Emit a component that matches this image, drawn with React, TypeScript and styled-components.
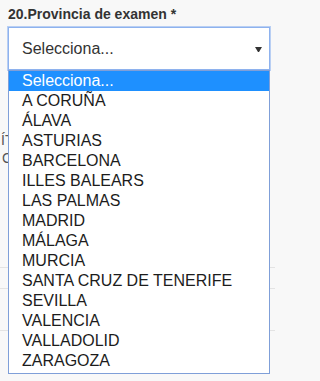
import React from "react";
import styled, { createGlobalStyle } from "styled-components";

const GlobalStyle = createGlobalStyle`
  html, body {
    margin: 0;
    padding: 0;
    background: #f8f8f8;
  }
  * { box-sizing: border-box; }
`;

const Page = styled.div`
  width: 275px;
  height: 381px;
  overflow: hidden;
  background: #f8f8f8;
  font-family: "Liberation Sans", Arial, sans-serif;
`;

const FormGroup = styled.div`
  padding: 4px 5px 0 8px;
`;

const Label = styled.label`
  display: block;
  font-size: 14px;
  font-weight: bold;
  line-height: 20px;
  color: #333;
  margin-bottom: 3px;
`;

const SelectWrap = styled.div`
  position: relative;
`;

const SelectBox = styled.div`
  height: 43px;
  display: flex;
  align-items: center;
  justify-content: space-between;
  padding: 0 7px 0 13px;
  background: #fff;
  border: 1px solid #8eb2ee;
  box-shadow: 0 0 0 1px #b9cff3;
  font-size: 16px;
  line-height: 20px;
  color: #333;
`;

const Arrow = styled.svg`
  display: block;
  width: 7px;
  height: 5px;
  margin-top: 1px;
`;

const Dropdown = styled.ul`
  position: absolute;
  top: 100%;
  left: 0;
  right: 0;
  z-index: 10;
  margin: 0;
  padding: 0 0 2px;
  list-style: none;
  background: #fff;
  border: 1px solid #7f9fd8;
`;

const Option = styled.li<{ $selected?: boolean }>`
  height: 20px;
  padding-left: 13px;
  font-size: 16px;
  line-height: 20px;
  white-space: nowrap;
  color: ${(p) => (p.$selected ? "#fff" : "#1c1c1c")};
  background: ${(p) => (p.$selected ? "#1e90ff" : "transparent")};
`;

const Behind = styled.div`
  padding-top: 61px;
`;

const BehindLine = styled.div<{ $indent: number }>`
  font-size: 14px;
  line-height: 18px;
  color: #555;
  white-space: nowrap;
  margin-left: ${(p) => p.$indent}px;
`;

const Spacer = styled.div<{ $h: number }>`
  height: ${(p) => p.$h}px;
`;

const RuleRow = styled.div<{ $h: number }>`
  height: ${(p) => p.$h}px;
  border-top: 1px solid #e3e3e3;
`;

const options = [
  "Selecciona...",
  "A CORUÑA",
  "ÁLAVA",
  "ASTURIAS",
  "BARCELONA",
  "ILLES BALEARS",
  "LAS PALMAS",
  "MADRID",
  "MÁLAGA",
  "MURCIA",
  "SANTA CRUZ DE TENERIFE",
  "SEVILLA",
  "VALENCIA",
  "VALLADOLID",
  "ZARAGOZA",
];

export default function App() {
  return (
    <Page>
      <GlobalStyle />
      <FormGroup>
        <Label>20.Provincia de examen *</Label>
        <SelectWrap>
          <SelectBox>
            <span>Selecciona...</span>
            <Arrow viewBox="0 0 7 5">
              <polygon points="0,0 7,0 4,5 3,5" fill="#333" />
            </Arrow>
          </SelectBox>
          <Dropdown>
            {options.map((o, i) => (
              <Option key={o} $selected={i === 0}>
                {o}
              </Option>
            ))}
          </Dropdown>
        </SelectWrap>
      </FormGroup>
      <Behind>
        <BehindLine $indent={1}>ÍT</BehindLine>
        <BehindLine $indent={2}>C</BehindLine>
        <Spacer $h={100} />
        <RuleRow $h={21} />
        <RuleRow $h={42} />
        <RuleRow $h={40} />
      </Behind>
    </Page>
  );
}
